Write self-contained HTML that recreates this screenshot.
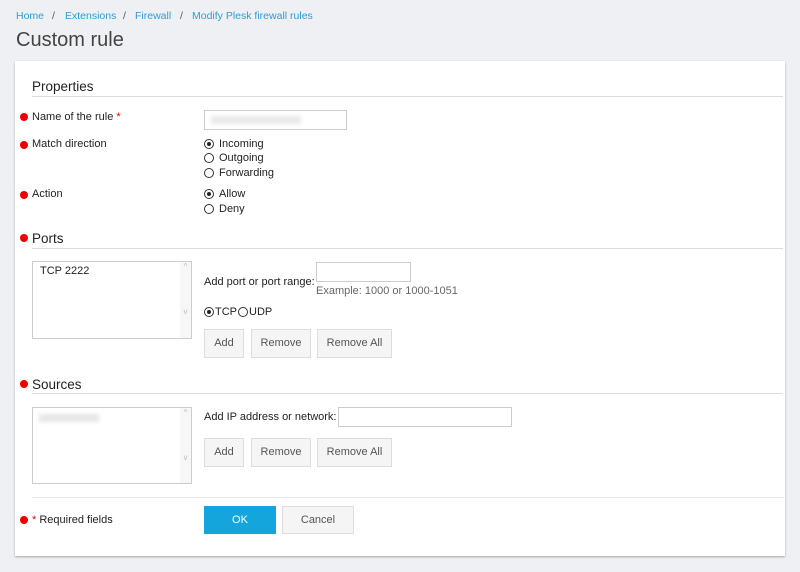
<!DOCTYPE html>
<html><head><style>
*{margin:0;padding:0;box-sizing:border-box}
body{width:800px;height:572px;background:#eef0f3;font-family:"Liberation Sans",sans-serif;font-size:11px;color:#222;position:relative;overflow:hidden}
.a{position:absolute;white-space:nowrap}
.bc{color:#2a9fd6;font-size:10.5px}
.panel{position:absolute;left:15px;top:61px;width:770px;height:495px;background:#fff;box-shadow:0 1px 2px rgba(0,0,0,.3)}
.h{font-size:13.5px;color:#222}
.line{position:absolute;height:1px;background:#dcdcdc}
.dot{position:absolute;width:8px;height:8px;border-radius:50%;background:#e00}
.rad{position:absolute;width:10px;height:10px;border:1px solid #333;border-radius:50%;background:#fff}
.rad.on::after{content:"";position:absolute;left:2px;top:2px;width:4px;height:4px;border-radius:50%;background:#222}
.box{position:absolute;border:1px solid #ccc;background:#fff}
.btn{position:absolute;height:29px;border:1px solid #ddd;background:#f5f5f5;color:#555;text-align:center;line-height:27px}
.sb{position:absolute;right:0;top:0;width:11px;height:100%;background:#f7f7f7;color:#bbb;font-size:8px;text-align:center}
</style></head><body>
<div class="a bc" style="left:16px;top:10px">Home</div>
<div class="a bc" style="left:52px;top:10px;color:#555">/</div>
<div class="a bc" style="left:65px;top:10px">Extensions</div>
<div class="a bc" style="left:123px;top:10px;color:#555">/</div>
<div class="a bc" style="left:135px;top:10px">Firewall</div>
<div class="a bc" style="left:180px;top:10px;color:#555">/</div>
<div class="a bc" style="left:192px;top:10px">Modify Plesk firewall rules</div>
<div class="a" style="left:16px;top:29px;font-size:20px;color:#444">Custom rule</div>
<div class="panel"></div>
<div class="a h" style="left:32px;top:79px">Properties</div>
<div class="line" style="left:32px;top:96px;width:751px"></div>
<div class="dot" style="left:20px;top:113px"></div>
<div class="a" style="left:32px;top:111px">Name of the rule <span style="color:#e00">*</span></div>
<div class="box" style="left:204px;top:110px;width:143px;height:20px;background:#fff"><div style="margin:5px 6px;width:90px;height:8px;background:#e8e8e8;filter:blur(2px)"></div></div>
<div class="dot" style="left:20px;top:141px"></div>
<div class="a" style="left:32px;top:138px">Match direction</div>
<div class="rad on" style="left:204px;top:139px"></div><div class="a" style="left:219px;top:138px">Incoming</div>
<div class="rad" style="left:204px;top:153px"></div><div class="a" style="left:219px;top:152px">Outgoing</div>
<div class="rad" style="left:204px;top:168px"></div><div class="a" style="left:219px;top:167px">Forwarding</div>
<div class="dot" style="left:20px;top:191px"></div>
<div class="a" style="left:32px;top:188px">Action</div>
<div class="rad on" style="left:204px;top:189px"></div><div class="a" style="left:219px;top:188px">Allow</div>
<div class="rad" style="left:204px;top:204px"></div><div class="a" style="left:219px;top:203px">Deny</div>
<div class="dot" style="left:20px;top:234px"></div>
<div class="a h" style="left:32px;top:231px">Ports</div>
<div class="line" style="left:32px;top:248px;width:751px"></div>
<div class="box" style="left:32px;top:261px;width:160px;height:78px"><div class="sb">^<br><br><br><br><br>v</div></div>
<div class="a" style="left:40px;top:265px">TCP 2222</div>
<div class="a" style="left:204px;top:276px">Add port or port range:</div>
<div class="box" style="left:316px;top:262px;width:95px;height:20px"></div>
<div class="a" style="left:316px;top:285px;color:#666">Example: 1000 or 1000-1051</div>
<div class="rad on" style="left:204px;top:307px"></div><div class="a" style="left:215px;top:306px">TCP</div>
<div class="rad" style="left:238px;top:307px"></div><div class="a" style="left:249px;top:306px">UDP</div>
<div class="btn" style="left:204px;top:329px;width:40px">Add</div>
<div class="btn" style="left:251px;top:329px;width:60px">Remove</div>
<div class="btn" style="left:317px;top:329px;width:75px">Remove All</div>
<div class="dot" style="left:20px;top:380px"></div>
<div class="a h" style="left:32px;top:377px">Sources</div>
<div class="line" style="left:32px;top:393px;width:751px"></div>
<div class="box" style="left:32px;top:407px;width:160px;height:77px"><div class="sb">^<br><br><br><br><br>v</div><div style="margin:6px 6px;width:60px;height:8px;background:#e6e6e6;filter:blur(2px)"></div></div>
<div class="a" style="left:204px;top:411px">Add IP address or network:</div>
<div class="box" style="left:338px;top:407px;width:174px;height:20px"></div>
<div class="btn" style="left:204px;top:438px;width:40px">Add</div>
<div class="btn" style="left:251px;top:438px;width:60px">Remove</div>
<div class="btn" style="left:317px;top:438px;width:75px">Remove All</div>
<div class="line" style="left:32px;top:497px;width:751px;background:#e6e6e6"></div>
<div class="dot" style="left:20px;top:516px"></div>
<div class="a" style="left:32px;top:514px"><span style="color:#e00">*</span> Required fields</div>
<div class="a" style="left:204px;top:506px;width:72px;height:28px;background:#14a5dc;color:#fff;text-align:center;line-height:28px">OK</div>
<div class="btn" style="left:282px;top:506px;width:72px;height:28px;line-height:26px">Cancel</div>
</body></html>
